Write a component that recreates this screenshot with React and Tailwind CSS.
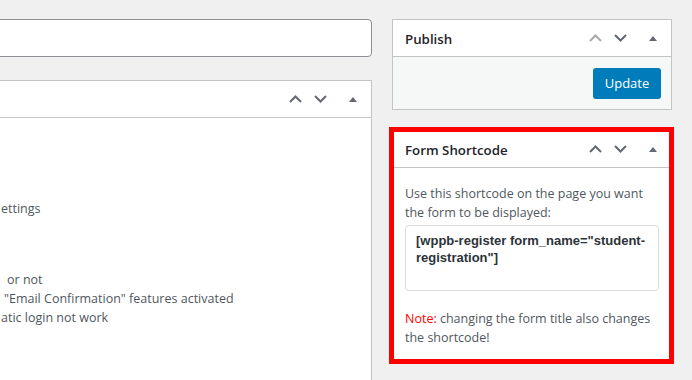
import React from 'react';

const font = { fontFamily: '"Open Sans", "Noto Sans", sans-serif' };

const ChevronUp = ({ color = '#646970' }) => (
  <svg width="13" height="8" viewBox="0 0 13 8" fill="none">
    <path d="M1 7L6.5 1.5L12 7" stroke={color} strokeWidth="2" />
  </svg>
);

const ChevronDown = ({ color = '#646970' }) => (
  <svg width="13" height="8" viewBox="0 0 13 8" fill="none">
    <path d="M1 1L6.5 6.5L12 1" stroke={color} strokeWidth="2" />
  </svg>
);

const Triangle = () => (
  <svg width="8" height="5" viewBox="0 0 8 5">
    <path d="M0 5L4 0L8 5Z" fill="#646970" />
  </svg>
);

// order + toggle buttons on the right of each box header
const HandleActions = ({ upDisabled = false }) => (
  <div className="flex items-center pr-[14px]">
    <ChevronUp color={upDisabled ? '#a7aaad' : '#646970'} />
    <span className="ml-[12px] flex">
      <ChevronDown />
    </span>
    <span className="ml-[22px] flex">
      <Triangle />
    </span>
  </div>
);

const BoxHeader = ({ title, upDisabled }) => (
  <div className="flex h-[37px] items-center justify-between border-b border-[#c3c4c7] pl-[12px]">
    <h2 className="mt-[4px] text-[13.3px] font-semibold text-[#1d2327]">{title}</h2>
    <HandleActions upDisabled={upDisabled} />
  </div>
);

export default function App() {
  return (
    <div className="h-[380px] overflow-hidden bg-[#f0f0f1]" style={font}>
      <div className="ml-[-10px] flex gap-5 pt-[19px]">
        {/* main column */}
        <div className="w-[382px] shrink-0">
          <div className="h-[38px] rounded border border-[#8c8f94] bg-white" />
          <div className="mt-[23px] h-[400px] border border-[#c3c4c7] bg-white">
            <BoxHeader title="" />
            <div className="text-[12.5px] leading-[19px] text-[#50575e]">
              <p className="mt-[81px] pl-[10px]">ettings</p>
              <p className="mt-[52px] pl-[16px]">or not</p>
              <p className="pl-[13px]">"Email Confirmation" features activated</p>
              <p className="pl-[10px]">atic login not work</p>
            </div>
          </div>
        </div>

        {/* sidebar */}
        <div className="w-[280px] shrink-0">
          <div className="border border-[#c3c4c7] bg-white">
            <BoxHeader title="Publish" upDisabled />
            <div className="flex justify-end bg-[#f6f7f7] px-[10px] pb-[10px] pt-[11px]">
              <button className="h-[31px] w-[68px] rounded-[3px] bg-[#007cba] text-[13px] text-white">
                Update
              </button>
            </div>
          </div>

          <div className="relative mt-[20px] border border-[#c3c4c7] bg-white">
            <BoxHeader title="Form Shortcode" />
            <div className="px-[12px] pb-[12px] pt-[16px] text-[12.5px] leading-[19px] text-[#50575e]">
              <p>Use this shortcode on the page you want the form to be displayed:</p>
              <div
                className="mt-[3px] h-[66px] rounded border border-[#dcdcde] bg-white px-[10px] pt-[6px] text-[13px] font-bold leading-[17px] text-[#2c3338]"
                style={{ fontFamily: '"Liberation Sans", Arial, sans-serif' }}
              >
                [wppb-register form_name="student-registration"]
              </div>
              <p className="mt-[18px]">
                <span className="text-[#ff0000]">Note:</span> changing the form title also changes the shortcode!
              </p>
            </div>
            {/* red highlight box drawn over the screenshot */}
            <div className="pointer-events-none absolute left-[-4px] right-[-3px] top-[-4px] bottom-[-5px] border-[5px] border-[#ff0000]" />
          </div>
        </div>
      </div>
    </div>
  );
}
